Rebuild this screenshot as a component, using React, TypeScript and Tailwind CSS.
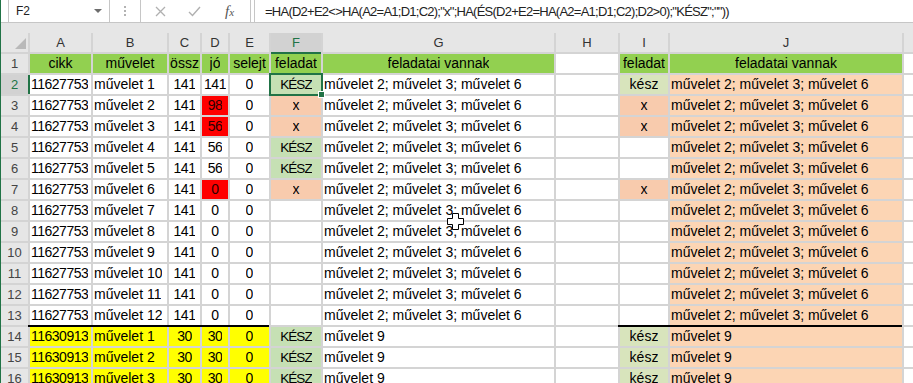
import React from "react";

type CellSpec = { t?: string; bg?: string; a?: "l" | "c"; fg?: string; top?: boolean };

const G3 = "művelet 2; művelet 3; művelet 6";
const COLS = ["A", "B", "C", "D", "E", "F", "G", "H", "I", "J", ""];

const W = "bg-white";
const HDR = "bg-[#92d050]";
const KESZ = "bg-[#c6e0b4]";
const KESZ2 = "bg-[#d8e4bc]";
const PINK = "bg-[#f8cbad]";
const PINKJ = "bg-[#fcd5b4]";
const RED = "bg-[#ff0000]";
const YEL = "bg-[#ffff00]";
const NUM = "tracking-[-0.5px]";
const KZ = "text-[13.5px] tracking-[-0.9px]";

function buildRows(): CellSpec[][] {
  const rows: CellSpec[][] = [];
  rows.push([
    { t: "cikk", bg: HDR, a: "c" },
    { t: "művelet", bg: HDR, a: "c" },
    { t: "össz", bg: HDR, a: "c" },
    { t: "jó", bg: HDR, a: "c" },
    { t: "selejt", bg: HDR, a: "c" },
    { t: "feladat", bg: HDR, a: "c" },
    { t: "feladatai vannak", bg: HDR, a: "c" },
    {},
    { t: "feladat", bg: HDR, a: "c" },
    { t: "feladatai vannak", bg: HDR, a: "c" },
    {},
  ]);
  const dvals = ["141", "98", "56", "56", "56", "0", "0", "0", "0", "0", "0", "0"];
  const fMap: Record<number, CellSpec> = {
    2: { t: "KÉSZ", bg: KESZ, a: "c", fg: KZ },
    3: { t: "x", bg: PINK, a: "c" },
    4: { t: "x", bg: PINK, a: "c" },
    5: { t: "KÉSZ", bg: KESZ, a: "c", fg: KZ },
    6: { t: "KÉSZ", bg: KESZ, a: "c", fg: KZ },
    7: { t: "x", bg: PINK, a: "c" },
  };
  const iMap: Record<number, CellSpec> = {
    2: { t: "kész", bg: KESZ2, a: "c" },
    3: { t: "x", bg: PINK, a: "c" },
    4: { t: "x", bg: PINK, a: "c" },
    7: { t: "x", bg: PINK, a: "c" },
  };
  for (let r = 2; r <= 13; r++) {
    const red = r === 3 || r === 4 || r === 7;
    rows.push([
      { t: "11627753", fg: NUM },
      { t: `művelet ${r - 1}` },
      { t: "141", a: "c", fg: NUM },
      { t: dvals[r - 2], a: "c", bg: red ? RED : W, fg: red ? "tracking-[-0.5px] text-[#2a0000]" : NUM },
      { t: "0", a: "c" },
      fMap[r] ?? {},
      { t: G3 },
      {},
      iMap[r] ?? {},
      { t: G3, bg: PINKJ },
      {},
    ]);
  }
  for (let r = 14; r <= 17; r++) {
    const top = r === 14;
    rows.push([
      { t: "11630913", bg: YEL, top, fg: NUM },
      { t: `művelet ${r - 13}`, bg: YEL, top },
      { t: "30", a: "c", bg: YEL, top, fg: NUM },
      { t: "30", a: "c", bg: YEL, top, fg: NUM },
      { t: "0", a: "c", bg: YEL, top },
      { t: "KÉSZ", bg: KESZ, a: "c", fg: KZ },
      { t: "művelet 9" },
      {},
      { t: "kész", bg: KESZ2, a: "c", top },
      { t: "művelet 9", bg: PINKJ, top },
      {},
    ]);
  }
  return rows;
}

function FormulaBar() {
  return (
    <div className="flex h-[23px] border-b border-[#c6c6c6] bg-white">
      <div className="ml-[7px] flex w-[102px] items-center justify-between border-x border-[#c6c6c6] pl-[7px] pr-[7px] text-[12px] leading-[22px] text-[#222]">
        <span>F2</span>
        <svg width="8" height="4" viewBox="0 0 8 4">
          <polygon points="0,0 8,0 4,4" fill="#6d6d6d" />
        </svg>
      </div>
      <div className="flex w-[30px] flex-col items-center justify-center gap-[2px]">
        <span className="h-[2px] w-[2px] bg-[#b3b3b3]" />
        <span className="h-[2px] w-[2px] bg-[#b3b3b3]" />
        <span className="h-[2px] w-[2px] bg-[#b3b3b3]" />
      </div>
      <div className="flex w-[111px] items-center border-x border-[#c6c6c6]">
        <svg className="ml-[14px]" width="11" height="11" viewBox="0 0 11 11">
          <path d="M1 1 L10 10 M10 1 L1 10" stroke="#b0b0b0" strokeWidth="1.3" />
        </svg>
        <svg className="ml-[22px]" width="13" height="11" viewBox="0 0 13 11">
          <path d="M1 6 L4.5 9.5 L12 1" stroke="#b0b0b0" strokeWidth="1.4" fill="none" />
        </svg>
        <span className="ml-[24px] font-['Liberation_Serif',serif] text-[15px] italic leading-[22px] text-[#555]">
          f<span className="text-[11px]">x</span>
        </span>
      </div>
      <div className="w-[3px]" />
      <div className="flex-1 overflow-hidden whitespace-nowrap border-l border-[#c6c6c6] pl-[10px] pt-[1px] text-[13px] leading-[21px] tracking-[-0.75px] text-[#222]">
        {'=HA(D2+E2<>HA(A2=A1;D1;C2);"x";HA(ÉS(D2+E2=HA(A2=A1;D1;C2);D2>0);"KÉSZ";""))'}
      </div>
    </div>
  );
}

function Sheet() {
  const rows = buildRows();
  return (
    <div className="grid grid-cols-[27px_61px_74px_31px_26px_39px_50px_231px_62px_48px_232px_9px] grid-rows-[19px_repeat(17,19px)] gap-[2px] bg-[#d4d4d4]">
      {/* corner */}
      <div className="flex items-end justify-end bg-[#e6e6e6] pb-[3px] pr-[2px]">
        <svg width="11" height="11" viewBox="0 0 11 11">
          <polygon points="11,0 11,11 0,11" fill="#b9b9b9" />
        </svg>
      </div>
      {COLS.map((c, i) => (
        <div
          key={"h" + i}
          className={
            c === "F"
              ? "bg-[#d2d2d2] text-center text-[13px] leading-[19px] text-[#217346] shadow-[0_2px_0_#217346]"
              : "bg-[#e6e6e6] text-center text-[13px] leading-[19px] text-[#333]"
          }
        >
          {c}
        </div>
      ))}
      {rows.map((row, ri) => {
        const rn = ri + 1;
        return (
          <React.Fragment key={"r" + rn}>
            <div
              className={
                rn === 2
                  ? "relative z-10 bg-[#d2d2d2] text-center text-[13px] leading-[19px] text-[#217346] shadow-[2px_0_0_#217346]"
                  : "bg-[#e6e6e6] text-center text-[13px] leading-[19px] text-[#444]"
              }
            >
              {rn}
            </div>
            {row.map((c, ci) => {
              const sel = rn === 2 && ci === 5;
              return (
                <div
                  key={ci}
                  className={`${c.bg ?? W} ${c.a === "c" ? "justify-center" : "justify-start pl-[1px]"} ${
                    sel ? "relative z-20 outline-2 outline-[#217346]" : c.top ? "relative" : ""
                  } flex whitespace-nowrap text-[14px] leading-[19px]`}
                >
                  <span className={`overflow-hidden ${c.fg ?? ""}`}>{c.t}</span>
                  {sel && (
                    <span className="absolute -bottom-[4px] -right-[4px] h-[7px] w-[7px] border border-white bg-[#217346]" />
                  )}
                  {c.top && <span className="absolute -left-[2px] -top-[2px] right-0 h-[2px] bg-black" />}
                </div>
              );
            })}
          </React.Fragment>
        );
      })}
    </div>
  );
}

function Cursor() {
  return (
    <svg className="absolute left-[446px] top-[213px]" width="17" height="17" viewBox="0 0 17 17">
      <polygon
        points="5.5,0.5 11.5,0.5 11.5,5.5 16.5,5.5 16.5,11.5 11.5,11.5 11.5,16.5 5.5,16.5 5.5,11.5 0.5,11.5 0.5,5.5 5.5,5.5"
        fill="#fff"
        stroke="#000"
        strokeWidth="1"
      />
    </svg>
  );
}

export default function App() {
  return (
    <div className="relative h-[383px] w-[913px] overflow-hidden border-l border-[#217346] bg-white font-['Liberation_Sans',Arial,sans-serif] text-black">
      <FormulaBar />
      <div className="h-[10px] bg-[#e6e6e6]" />
      <Sheet />
      <Cursor />
    </div>
  );
}
